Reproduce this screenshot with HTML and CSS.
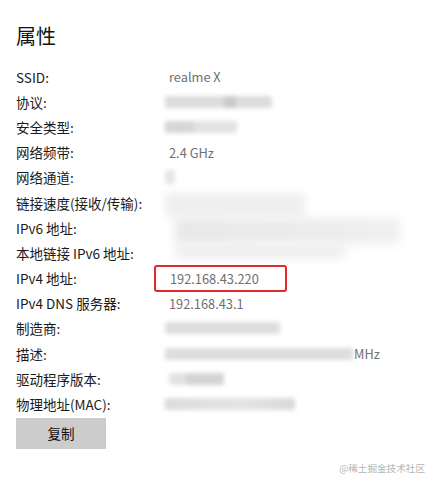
FILE: index.html
```html
<!DOCTYPE html>
<html lang="zh">
<head>
<meta charset="utf-8">
<link rel="stylesheet" href="styles.css">
</head>
<body>
<div class="page">
  <h1 class="title">属性</h1>
  <div class="props">
    <div class="row"><span class="label">SSID:</span><span class="value">realme X</span></div>
    <div class="row"><span class="label">协议:</span><span class="value"><span class="blur b-proto"></span></span></div>
    <div class="row"><span class="label">安全类型:</span><span class="value"><span class="blur b-sec"></span></span></div>
    <div class="row"><span class="label">网络频带:</span><span class="value">2.4 GHz</span></div>
    <div class="row"><span class="label">网络通道:</span><span class="value"><span class="blur b-chan"></span></span></div>
    <div class="row"><span class="label">链接速度(接收/传输):</span><span class="value"><span class="blur b-speed"></span></span></div>
    <div class="row"><span class="label">IPv6 地址:</span><span class="value"><span class="blur b-ipv6"></span></span></div>
    <div class="row"><span class="label">本地链接 IPv6 地址:</span><span class="value"><span class="blur b-link"></span></span></div>
    <div class="row"><span class="label">IPv4 地址:</span><span class="value"><span class="highlight">192.168.43.220</span></span></div>
    <div class="row"><span class="label">IPv4 DNS 服务器:</span><span class="value">192.168.43.1</span></div>
    <div class="row"><span class="label">制造商:</span><span class="value"><span class="blur b-maker"></span></span></div>
    <div class="row"><span class="label">描述:</span><span class="value"><span class="blur b-desc"></span><span class="mhz">MHz</span></span></div>
    <div class="row"><span class="label">驱动程序版本:</span><span class="value"><span class="blur b-drv"></span></span></div>
    <div class="row"><span class="label">物理地址(MAC):</span><span class="value"><span class="blur b-mac"></span></span></div>
  </div>
  <button class="copy">复制</button>
  <div class="footer"><span class="watermark">@稀土掘金技术社区</span></div>
</div>
</body>
</html>
```
FILE: styles.css
```css
html, body {
  margin: 0;
  padding: 0;
  background: #ffffff;
}
body {
  font-family: "Noto Sans CJK SC", "Noto Sans", sans-serif;
  color: #000;
}
.page {
  width: 437px;
  height: 489px;
  padding: 0 0 0 16px;
  box-sizing: border-box;
  display: flex;
  flex-direction: column;
}
.title {
  margin: 22px 0 0 0;
  font-size: 20px;
  font-weight: 400;
  line-height: 28px;
  height: 28px;
  color: #111;
}
.props {
  margin-top: 14px;
  display: flex;
  flex-direction: column;
}
.row {
  display: flex;
  height: 25.2px;
  align-items: center;
  font-size: 13.5px;
}
.label {
  width: 153px;
  flex: none;
  white-space: nowrap;
  color: #1a1a1a;
}
.value {
  color: #707070;
  font-size: 12.8px;
  display: flex;
  align-items: center;
  position: relative;
  white-space: nowrap;
}
.highlight {
  margin-left: -15px;
  padding: 0 26px 0 14px;
  height: 23px;
  line-height: 23px;
  border: 2px solid #e32a2a;
  border-radius: 3px;
}
.blur {
  display: inline-block;
  background: #d9d9d9;
  filter: blur(2px);
  border-radius: 2px;
}
.b-proto {
  width: 107px;
  height: 12px;
  margin-left: -4px;
  background: linear-gradient(90deg, #dcdcdc 0 55%, #c9c9c9 55% 66%, #dcdcdc 66%);
}
.b-sec {
  width: 72px;
  height: 12px;
  margin-left: -4px;
  background: linear-gradient(90deg, #d6d6d6 0 40%, #e2e2e2 40%);
}
.b-chan {
  width: 10px;
  height: 14px;
  margin-left: -4px;
  background: #e6e6e6;
}
.b-speed {
  width: 140px;
  height: 24px;
  margin-left: -4px;
  margin-top: 4px;
  background: #efefef;
  filter: blur(4px);
}
.b-ipv6 {
  width: 225px;
  height: 26px;
  margin-left: 6px;
  margin-top: 6px;
  background: linear-gradient(90deg, #e8e8e8, #ececec 60%, #f0f0f0);
  filter: blur(5px);
}
.b-link {
  width: 170px;
  height: 16px;
  margin-left: 6px;
  margin-top: -4px;
  background: #efefef;
  filter: blur(5px);
}
.b-maker {
  width: 115px;
  height: 12px;
  margin-left: -4px;
  background: #dedede;
}
.b-desc {
  width: 188px;
  height: 12px;
  margin-left: -4px;
  background: #dddddd;
}
.mhz {
  margin-left: 1px;
}
.b-drv {
  width: 55px;
  height: 12px;
  background: linear-gradient(90deg, #e2e2e2 0 30%, #d4d4d4 30%);
}
.b-mac {
  width: 130px;
  height: 12px;
  margin-left: -4px;
  background: linear-gradient(90deg, #dcdcdc, #e4e4e4 60%, #d9d9d9);
}
.copy {
  margin-top: 1px;
  width: 90px;
  height: 31px;
  border: none;
  background: #cccccc;
  font-family: "Noto Sans CJK SC", sans-serif;
  font-size: 13.5px;
  color: #111;
  padding: 0;
}
.footer {
  display: flex;
  justify-content: flex-end;
  padding-right: 12px;
  margin-top: 12px;
}
.watermark {
  font-size: 9.6px;
  color: #b4b4b4;
}
```
